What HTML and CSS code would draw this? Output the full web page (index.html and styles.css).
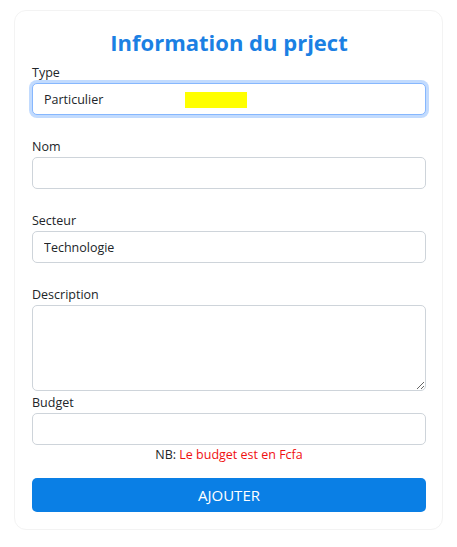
FILE: index.html
```html
<!DOCTYPE html>
<html lang="fr">
<head>
<meta charset="utf-8">
<title>Information du prject</title>
<link rel="stylesheet" href="styles.css">
</head>
<body>
<div class="card">
  <h2 class="title">Information du prject</h2>
  <form class="form">
    <div class="group">
      <label class="label">Type</label>
      <div class="field-wrap">
        <input class="input focused" type="text" value="Particulier">
        <span class="redact"></span>
      </div>
    </div>
    <div class="group">
      <label class="label">Nom</label>
      <input class="input" type="text">
    </div>
    <div class="group">
      <label class="label">Secteur</label>
      <input class="input" type="text" value="Technologie">
    </div>
    <div class="group group-tight">
      <label class="label">Description</label>
      <textarea class="input textarea"></textarea>
    </div>
    <div class="group group-budget">
      <label class="label">Budget</label>
      <input class="input" type="text">
    </div>
    <p class="note">NB: <span class="note-red">Le budget est en Fcfa</span></p>
    <button class="btn" type="button">AJOUTER</button>
  </form>
</div>
</body>
</html>
```
FILE: styles.css
```css
* { box-sizing: border-box; }
body {
  margin: 0;
  padding: 10px 14px;
  background: #fff;
  font-family: "Open Sans", "Noto Sans", sans-serif;
  color: #212529;
}
.card {
  border: 1px solid #f3f3f3;
  border-radius: 12px;
  padding: 14px 16px 17px 17px;
  background: #fff;
}
.title {
  margin: 0 0 2px;
  text-align: center;
  font-size: 22px;
  line-height: 34px;
  font-weight: 700;
  color: #1b80e3;
}
.form { display: flex; flex-direction: column; }
.group { display: flex; flex-direction: column; margin-bottom: 20px; }
.group-tight { margin-bottom: 0; }
.group-budget { margin-bottom: 0; }
.label {
  font-size: 12.5px;
  line-height: 20px;
  padding-top: 2px;
  color: #212529;
}
.field-wrap { position: relative; }
.input {
  display: block;
  width: 100%;
  height: 32px;
  border: 1px solid #ced4da;
  border-radius: 5px;
  padding: 0 11px;
  font-family: inherit;
  font-size: 12.5px;
  color: #212529;
  background: #fff;
  outline: none;
}
.focused {
  border-color: #86b7fe;
  box-shadow: 0 0 0 3px rgba(13, 110, 253, 0.25);
}
.textarea {
  height: 86px;
  resize: vertical;
  padding: 6px 11px;
}
.redact {
  position: absolute;
  left: 153px;
  top: 9px;
  width: 62px;
  height: 16px;
  background: #ffff00;
}
.note {
  margin: 0;
  text-align: center;
  font-size: 12.5px;
  line-height: 20px;
  color: #212529;
}
.note-red { color: #f01010; }
.btn {
  margin-top: 13px;
  height: 34px;
  width: 100%;
  border: none;
  border-radius: 5px;
  background: #0a7fe5;
  color: #fff;
  font-family: inherit;
  font-size: 15px;
  cursor: pointer;
}
```
